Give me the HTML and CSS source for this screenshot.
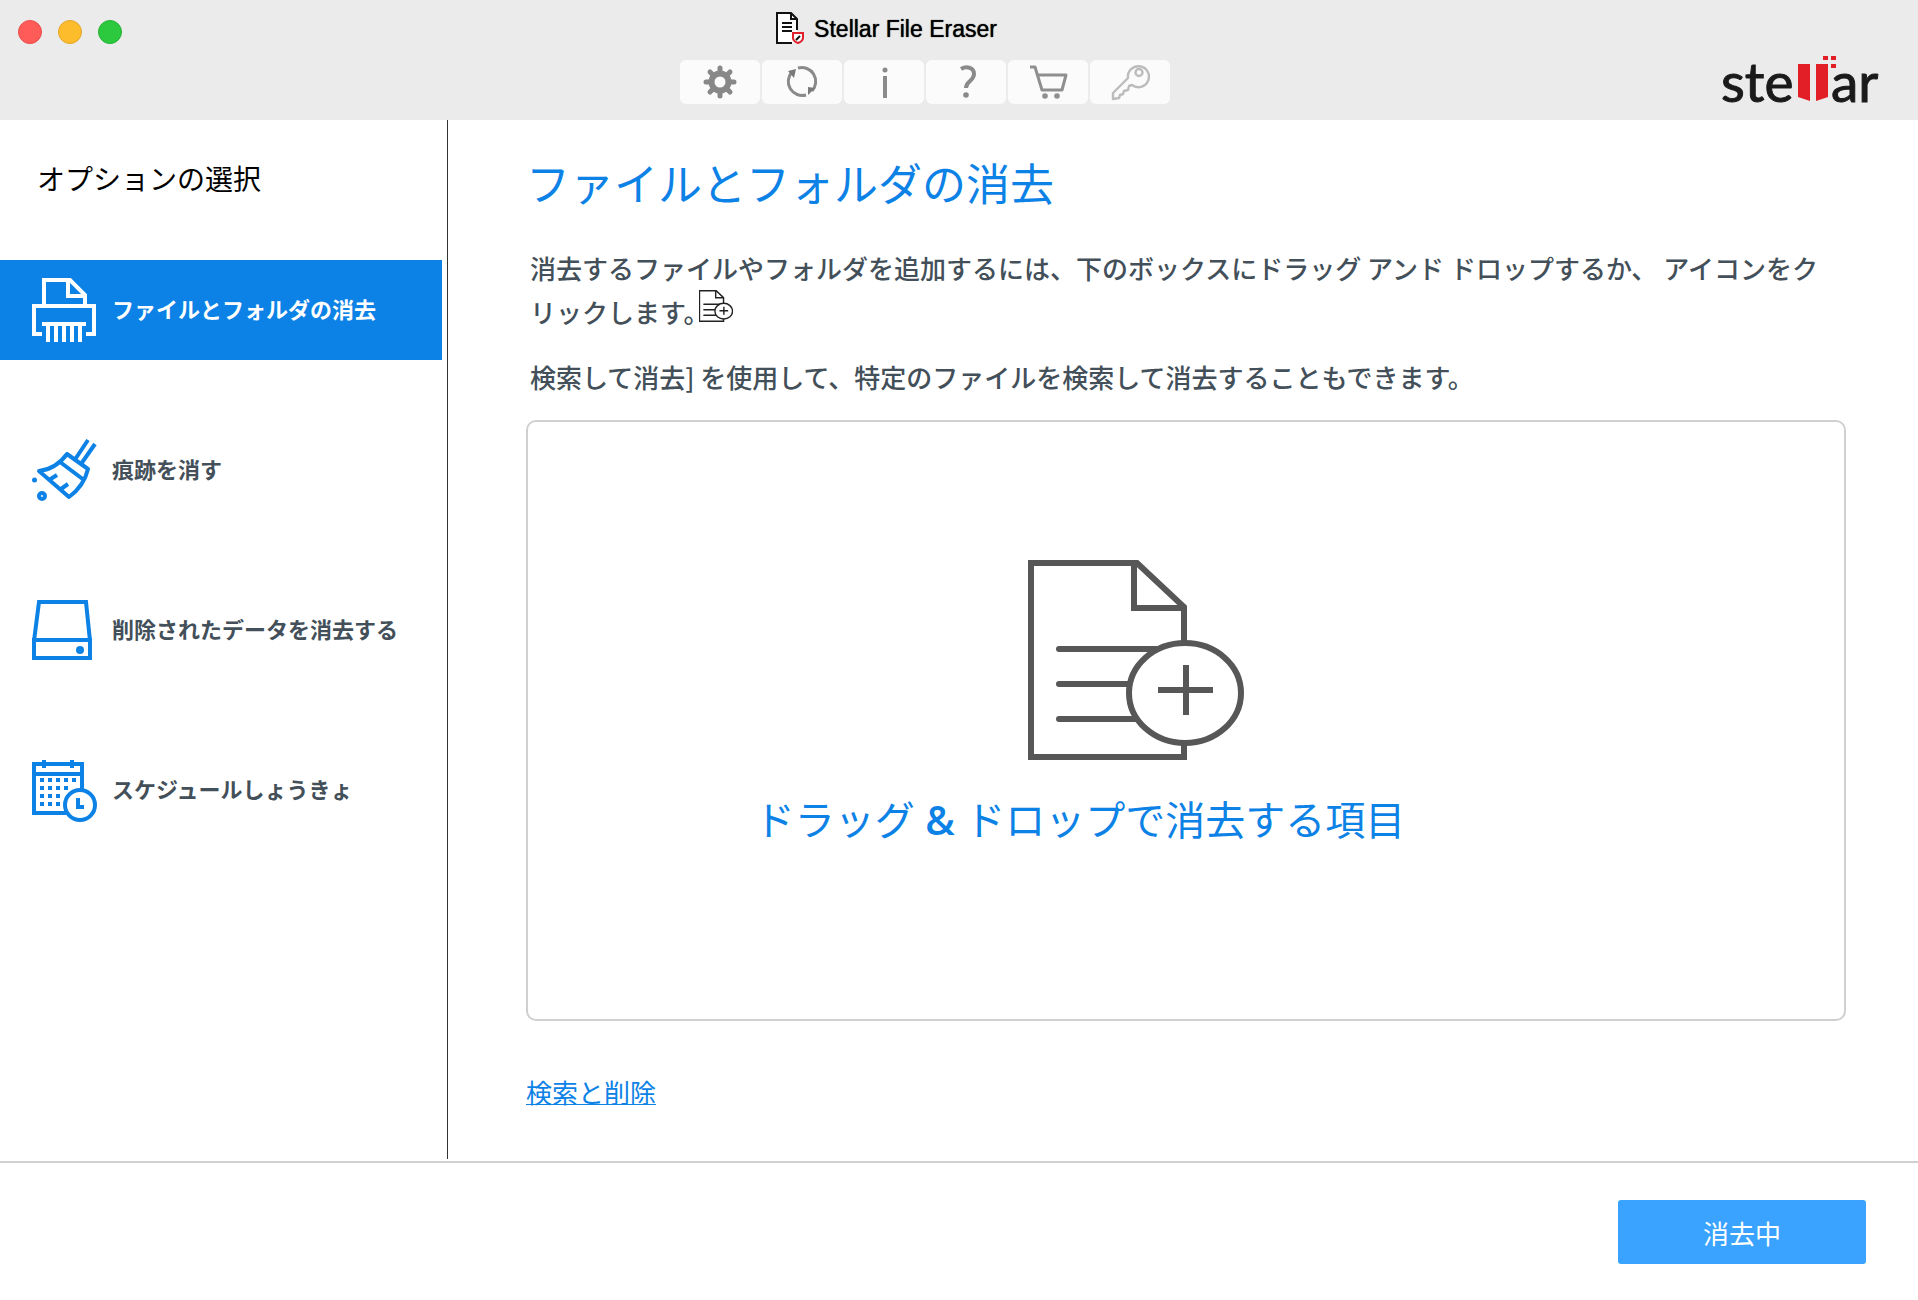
FILE: index.html
```html
<!DOCTYPE html>
<html lang="ja">
<head>
<meta charset="utf-8">
<title>Stellar File Eraser</title>
<link rel="stylesheet" href="styles.css">
</head>
<body>
<svg class="defs" aria-hidden="true">
  <symbol id="add-file" viewBox="0 0 216 200">
    <path d="M156 197H3V3h106l47 44zM106 3v45h50" fill="none"/>
    <path d="M31 89h110M31 124h80M31 159h90" fill="none" stroke-linecap="round"/>
    <ellipse cx="157" cy="133" rx="56" ry="50" fill="#fff"/>
    <path d="M158 105v50M130 130h55" fill="none"/>
  </symbol>
</svg>
<header class="titlebar">
  <div class="lights">
    <button class="light close" aria-label="閉じる"></button>
    <button class="light minimize" aria-label="最小化"></button>
    <button class="light maximize" aria-label="最大化"></button>
  </div>
  <div class="titlebar-center">
    <div class="app-title">
      <svg width="28" height="32" viewBox="0 0 28 32" aria-hidden="true">
        <path d="M15 1H1v30h17l3-11V7z" fill="#fff"/>
        <path d="M21 18V7l-6-6H1v30h15M15 1v6h6" fill="none" stroke="#111" stroke-width="2"/>
        <path d="M6 11h10M6 15h10M6 19h10" stroke="#111" stroke-width="2"/>
        <path d="M17 21h10v5q0 3-5 5q-5-2-5-5z" fill="#fff" stroke="#e0202a" stroke-width="2"/>
        <path d="M20 28l4-4" stroke="#111" stroke-width="2"/>
      </svg>
      <h1 class="app-name">Stellar File Eraser</h1>
    </div>
    <nav class="toolbar">
      <button class="tool" aria-label="設定"><svg viewBox="0 0 80 44">
        <circle cx="40" cy="22" r="8.500" fill="none" stroke="#888" stroke-width="6"/>
        <g stroke="#888" stroke-width="5" stroke-linecap="round"><path d="M40 12V8M40 32v4M30 22h-4M50 22h4M33 15l-3-3M47 15l3-3M33 29l-3 3M47 29l3 3"/></g>
      </svg></button>
      <button class="tool" aria-label="更新"><svg viewBox="0 0 80 44">
        <path d="M36 8A14 14 0 0 1 50 31M44 35A14 14 0 0 1 30 12" fill="none" stroke="#8a8a8a" stroke-width="3"/>
        <path d="M26 11l8-2-2 9zM46 27l7 1-7 7z" fill="#7a7a7a"/>
      </svg></button>
      <button class="tool" aria-label="情報"><svg viewBox="0 0 80 44">
        <circle cx="41" cy="10" r="2.500" fill="#8a8a8a"/><path d="M41 16v22" stroke="#8a8a8a" stroke-width="4"/>
      </svg></button>
      <button class="tool" aria-label="ヘルプ"><svg viewBox="0 0 80 44">
        <path d="M35 9c5-3 13-2 13 5 0 7-8 7-8 14" fill="none" stroke="#8a8a8a" stroke-width="4"/><circle cx="40" cy="35" r="2.800" fill="#8a8a8a"/>
      </svg></button>
      <button class="tool" aria-label="購入"><svg viewBox="0 0 80 44">
        <path d="M22 7h5l7 23h20l4-15H30" fill="none" stroke="#8f8f8f" stroke-width="3" stroke-linejoin="round"/>
        <circle cx="37" cy="36" r="2.800" fill="#8f8f8f"/><circle cx="49" cy="36" r="2.800" fill="#8f8f8f"/>
      </svg></button>
      <button class="tool" aria-label="アクティブ化"><svg viewBox="0 0 80 44">
        <path d="M38 18L23 33v6l6-1 1-3 3-1 1-3 4-1 1-4 3-1A10.500 10.500 0 1 0 38 18z" fill="none" stroke="#bcbcbc" stroke-width="2.400" stroke-linejoin="round"/>
        <circle cx="49" cy="12.500" r="3.500" fill="none" stroke="#bcbcbc" stroke-width="2.400"/>
      </svg></button>
    </nav>
  </div>
  <svg class="brand" width="158" height="70" viewBox="0 -8 158 70" role="img" aria-label="stellar">
    <text x="0" y="49">ste</text>
    <path d="M77 11h12v37l-12-4zM95 11h12v33l-12 4z" fill="#e21e26"/>
    <path d="M102 3h5v4h-5zM110 3h5v4h-5zM110 11h5v4h-5z" fill="#e21e26"/>
    <text x="110" y="49">ar</text>
  </svg>
</header>
<div class="workspace">
  <aside class="sidebar">
    <h2 class="sidebar-title">オプションの選択</h2>
    <nav class="menu">
      <button class="menu-item active">
        <svg viewBox="0 0 64 66" aria-hidden="true"><path d="M12 27V3h26l15 15v9M36 3v16h17M10 57H2V29h60v28h-8M10 47h44M16 47v18M24 47v18M32 47v18M40 47v18M48 47v18"/></svg>
        <span class="menu-label">ファイルとフォルダの消去</span>
      </button>
      <button class="menu-item">
        <svg viewBox="0 0 64 64" aria-hidden="true"><path d="M56 2L44 20M63 6L49 26M7 33Q24 31 35 16L56 31Q52 48 37 59ZM28 24L52 42M17 42l8-5M29 51l7-5" stroke-linejoin="round"/><circle cx="2.500" cy="42" r="2.500" class="dot"/><circle cx="10" cy="58" r="3"/></svg>
        <span class="menu-label">痕跡を消す</span>
      </button>
      <button class="menu-item">
        <svg viewBox="0 0 64 64" aria-hidden="true"><path d="M2 43L7 4h47l4 39M2 42h56v18H2z"/><circle cx="48" cy="52" r="4" class="dot"/></svg>
        <span class="menu-label">削除されたデータを消去する</span>
      </button>
      <button class="menu-item">
        <svg viewBox="0 0 64 64" aria-hidden="true"><path d="M50 31V6H2v49h32M2 16h48M12 2v8M40 2v8"/><path d="M8 22h38M8 30h28M8 38h20M8 46h20" stroke-dasharray="4 4"/><circle cx="48" cy="47" r="15"/><path d="M46 40v9h6"/></svg>
        <span class="menu-label">スケジュールしょうきょ</span>
      </button>
    </nav>
  </aside>
  <main class="content">
    <h2 class="page-title">ファイルとフォルダの消去</h2>
    <p class="lead">消去するファイルやフォルダを追加するには、下のボックスにドラッグ アンド ドロップするか、 アイコンをクリックします。<svg class="inline-icon" aria-hidden="true"><use href="#add-file"/></svg></p>
    <p class="lead">検索して消去] を使用して、特定のファイルを検索して消去することもできます。</p>
    <section class="dropzone">
      <svg class="drop-icon" aria-hidden="true"><use href="#add-file"/></svg>
      <p class="drop-label">ドラッグ<span class="amp"> &amp; </span>ドロップで消去する項目</p>
    </section>
    <a class="search-link" href="#search">検索と削除</a>
  </main>
</div>
<footer class="footer">
  <button class="primary">消去中</button>
</footer>
</body>
</html>
```
FILE: styles.css
```css
* {
  box-sizing: border-box;
}

body {
  margin: 0;
  min-height: 100vh;
  display: flex;
  flex-direction: column;
  background: #fff;
  color: #434f59;
  font-family: "Noto Sans CJK JP", sans-serif;
}

h1, h2, p {
  margin: 0;
  font-weight: 400;
}

button {
  border: 0;
  padding: 0;
  font-family: inherit;
}

.defs {
  position: absolute;
  width: 0;
  height: 0;
}

.titlebar {
  display: grid;
  grid-template-columns: 1fr auto 1fr;
  height: 120px;
  padding: 0 39px 0 18px;
  background: #ebebeb;
}

.lights {
  display: flex;
  gap: 16px;
  padding-top: 20px;
}

.light {
  width: 24px;
  height: 24px;
  border-radius: 50%;
}

.close {
  background: #ff5b58;
  border: 1px solid #e94b48;
}

.minimize {
  background: #fdbc2c;
  border: 1px solid #e5a626;
}

.maximize {
  background: #2cc93f;
  border: 1px solid #25b236;
}

.titlebar-center {
  margin-right: 48px;
}

.app-title {
  display: flex;
  align-items: center;
  justify-content: center;
  gap: 10px;
  height: 60px;
  padding: 0 76px 4px 0;
}

.app-name {
  padding-top: 2px;
  color: #000;
  font-family: "Liberation Sans", sans-serif;
  font-size: 23px;
  text-shadow: 0 0 1px #000;
}

.toolbar {
  display: flex;
  gap: 2px;
}

.tool {
  width: 80px;
  height: 44px;
  border-radius: 6px;
  background: #fbfbfb;
}

.tool svg {
  display: block;
}

.brand {
  justify-self: end;
  margin-top: 45px;
}

.brand text {
  fill: #1a1a1a;
  stroke: #1a1a1a;
  stroke-width: 1px;
  font-family: Lato, sans-serif;
  font-size: 55px;
}

.workspace {
  flex: 1;
  display: flex;
}

.sidebar {
  flex: none;
  width: 448px;
  border-right: 1px solid #333;
  margin-bottom: 2px;
}

.sidebar-title {
  padding: 38px 37px 62px;
  color: #000;
  font-size: 28px;
  line-height: 40px;
}

.menu {
  display: flex;
  flex-direction: column;
  gap: 60px;
}

.menu-item {
  display: flex;
  align-items: center;
  gap: 16px;
  width: 442px;
  height: 100px;
  padding: 0 32px;
  background: none;
  color: #434f59;
  font-size: 22px;
  font-weight: 700;
}

.menu-item svg {
  flex: none;
  width: 64px;
  height: 66px;
  overflow: visible;
  fill: none;
  stroke: #0d82e6;
  stroke-width: 4;
}

.menu-item .dot {
  fill: #0d82e6;
  stroke: none;
}

.menu-label {
  padding-bottom: 4px;
}

.menu-item.active {
  background: #0d82e6;
  color: #fff;
}

.menu-item.active svg {
  stroke: #fff;
}

.content {
  flex: 1;
  display: flex;
  flex-direction: column;
  padding: 30px 72px 49px 78px;
}

.page-title {
  margin-bottom: 32px;
  color: #0d82e6;
  font-size: 44px;
  line-height: 64px;
}

.lead {
  padding: 0 20px 0 4px;
  margin-bottom: 21px;
  font-size: 26px;
  font-weight: 500;
  line-height: 44px;
}

.inline-icon {
  width: 34px;
  height: 34px;
  margin: -12px 0 0 -10px;
  vertical-align: 0;
  stroke: #222;
  stroke-width: 9;
}

.dropzone {
  flex: 1;
  display: flex;
  flex-direction: column;
  align-items: center;
  padding: 138px 100px 138px 0;
  border: 2px solid #d0d0d0;
  border-radius: 10px;
}

.drop-icon {
  width: 216px;
  height: 200px;
  stroke: #575757;
  stroke-width: 6;
}

.drop-label {
  margin-top: 28px;
  padding-right: 112px;
  color: #0d82e6;
  font-size: 40px;
  line-height: 60px;
}

.amp {
  font-family: "Open Sans", sans-serif;
  font-weight: 600;
}

.search-link {
  align-self: flex-start;
  margin-top: 51px;
  color: #0d82e6;
  font-size: 26px;
  line-height: 40px;
  text-decoration-thickness: 1px;
}

.footer {
  display: flex;
  justify-content: flex-end;
  padding: 37px 52px 36px;
  border-top: 2px solid #d0d0d0;
}

.primary {
  width: 248px;
  height: 64px;
  border-radius: 3px;
  background: #39a3ff;
  color: #fff;
  font-size: 26px;
}
```
